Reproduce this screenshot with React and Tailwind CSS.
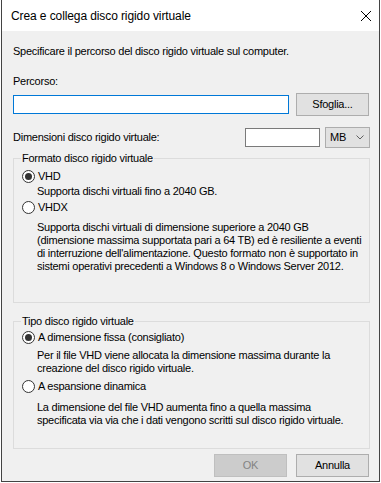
import { X } from "lucide-react";

function Radio({ checked, label }) {
  return (
    <div className="flex items-center h-[15px] leading-[15px]">
      <span className="w-[13px] h-[13px] rounded-full border border-[#333333] bg-white flex items-center justify-center shrink-0">
        {checked && <span className="w-[7px] h-[7px] rounded-full bg-[#333333]" />}
      </span>
      <span className="ml-[3px]">{label}</span>
    </div>
  );
}

function GroupBox({ title, className, children }) {
  return (
    <div className={"relative border border-[#dcdcdc] " + className}>
      <span className="absolute left-[7px] top-[-8px] px-[1px] bg-[#f0f0f0] leading-[15px]">{title}</span>
      {children}
    </div>
  );
}

function Button({ children, disabled }) {
  return (
    <div
      className={
        "w-[73px] h-[23px] border flex items-center justify-center leading-[15px] " +
        (disabled ? "bg-[#cccccc] border-[#bfbfbf] text-[#838383]" : "bg-[#e1e1e1] border-[#adadad]")
      }
    >
      {children}
    </div>
  );
}

export default function App() {
  return (
    <div className="w-[381px] h-[483px] bg-white font-['Liberation_Sans',Arial,sans-serif] text-[11px] tracking-[-0.25px] text-black">
      <div className="ml-[1px] w-[379px] h-[482px] border-x border-b border-[#434343] bg-[#f0f0f0] flex flex-col">
        {/* title bar */}
        <div className="h-[31px] shrink-0 bg-white flex items-center justify-between pl-[9px] pr-[7px]">
          <span className="text-[12px] tracking-[-0.1px]">Crea e collega disco rigido virtuale</span>
          <svg width="12" height="12" viewBox="0 0 12 12" className="text-black">
            <path d="M1 1 L11 11 M11 1 L1 11" stroke="currentColor" strokeWidth="1" fill="none" />
          </svg>
        </div>

        <div className="pl-[11px] pr-[9px] flex flex-col">
          <div className="mt-[13px] h-[15px] leading-[15px]">
            Specificare il percorso del disco rigido virtuale sul computer.
          </div>

          <div className="mt-[15px] h-[15px] leading-[15px]">Percorso:</div>

          <div className="mt-[4px] h-[23px] flex items-center">
            <div className="w-[276px] h-[19px] border border-[#0078d7] bg-white" />
            <div className="ml-[7px]">
              <Button>Sfoglia...</Button>
            </div>
          </div>

          <div className="mt-[11px] h-[21px] flex items-center">
            <span className="leading-[15px]">Dimensioni disco rigido virtuale:</span>
            <div className="ml-auto w-[75px] h-[19px] border border-[#7a7a7a] bg-white" />
            <div className="ml-[5px] w-[45px] h-[21px] border border-[#adadad] bg-[#e1e1e1] flex items-center pl-[4px] pr-[5px]">
              <span className="leading-[15px]">MB</span>
              <svg width="8" height="5" viewBox="0 0 8 5" className="ml-auto">
                <path d="M0.5 0.5 L4 4 L7.5 0.5" stroke="#606060" strokeWidth="1" fill="none" />
              </svg>
            </div>
          </div>

          <GroupBox title="Formato disco rigido virtuale" className="mt-[10px] h-[145px] pt-[10px] pl-[8px]">
            <Radio checked label="VHD" />
            <div className="ml-[15px] leading-[15px]">Supporta dischi virtuali fino a 2040 GB.</div>
            <div className="mt-[1px]">
              <Radio label="VHDX" />
            </div>
            <div className="mt-[6px] ml-[15px] leading-[13px]">
              Supporta dischi virtuali di dimensione superiore a 2040 GB
              <br />
              (dimensione massima supportata pari a 64 TB) ed è resiliente a eventi
              <br />
              di interruzione dell'alimentazione. Questo formato non è supportato in
              <br />
              sistemi operativi precedenti a Windows 8 o Windows Server 2012.
            </div>
          </GroupBox>

          <GroupBox title="Tipo disco rigido virtuale" className="mt-[18px] h-[128px] pt-[8px] pl-[8px]">
            <Radio checked label="A dimensione fissa (consigliato)" />
            <div className="mt-[4px] ml-[15px] leading-[13px]">
              Per il file VHD viene allocata la dimensione massima durante la
              <br />
              creazione del disco rigido virtuale.
            </div>
            <div className="mt-[4px]">
              <Radio label="A espansione dinamica" />
            </div>
            <div className="mt-[7px] ml-[15px] leading-[13px]">
              La dimensione del file VHD aumenta fino a quella massima
              <br />
              specificata via via che i dati vengono scritti sul disco rigido virtuale.
            </div>
          </GroupBox>

          <div className="mt-[5px] flex justify-end gap-[9px] pr-[1px]">
            <Button disabled>OK</Button>
            <Button>Annulla</Button>
          </div>
        </div>
      </div>
    </div>
  );
}
